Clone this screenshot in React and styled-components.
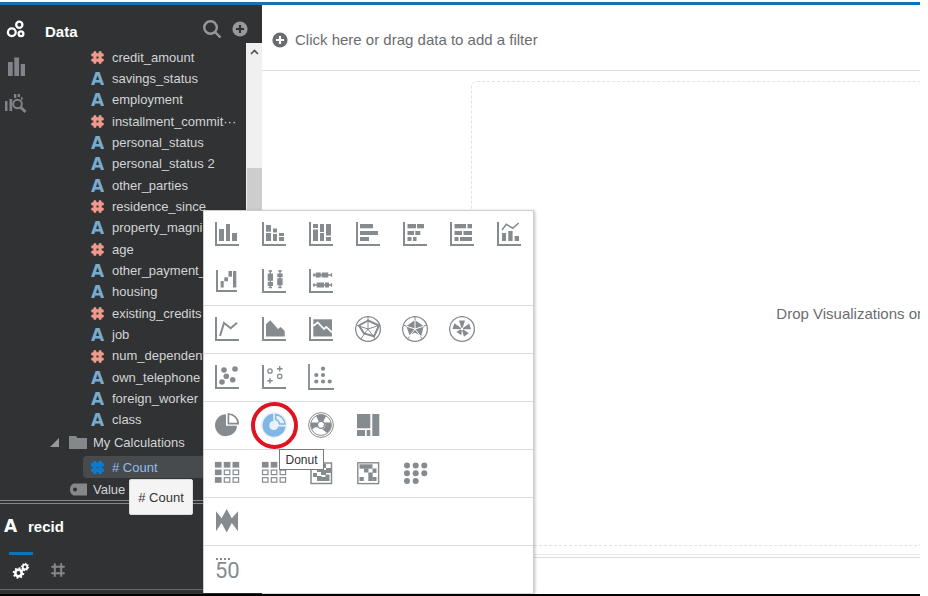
import React from "react";
import styled, { createGlobalStyle, css } from "styled-components";

const GlobalStyle = createGlobalStyle`
  * { box-sizing: border-box; }
  body { margin: 0; background: #fff; font-family: "Liberation Sans", Arial, sans-serif; font-size: 13px; }
  button { font: inherit; color: inherit; border: 0; padding: 0; background: none; cursor: pointer; }
  svg { display: block; flex: none; }
`;

const Page = styled.div`
  position: relative;
  display: flex;
  flex-direction: column;
  min-height: 100vh;
  margin-right: 8px;
  padding-top: 2px;
  border-bottom: 2px solid #000;
  overflow: hidden;
`;
const TopLine = styled.div`
  height: 3px;
  background: #1272b6;
`;
const Body = styled.div`
  flex: 1;
  display: flex;
`;
const Sidebar = styled.aside`
  width: 262px;
  flex: none;
  display: flex;
  flex-direction: column;
  background: #303234;
  color: #d3d4d5;
`;
const Upper = styled.div`
  flex: 1;
  display: flex;
`;
const Rail = styled.nav`
  width: 45px;
  padding: 13px 0 0 4px;
  display: flex;
  flex-direction: column;
  gap: 14px;
`;
const RailButton = styled.button`
  width: 24px;
  height: 23px;
  color: ${(p) => (p.$active ? "#fff" : "#808488")};
`;
const Panel = styled.section`
  flex: 1;
  min-width: 0;
  display: flex;
  flex-direction: column;
`;
const PanelHeader = styled.header`
  height: 38px;
  padding: 10px 14px 0 0;
  display: flex;
  gap: 10px;
`;
const Title = styled.h2`
  flex: 1;
  margin: 0;
  padding-top: 7px;
  font-size: 15px;
  line-height: 20px;
  color: #fff;
`;
const ToolButton = styled.button`
  height: 28px;
  display: flex;
  align-items: center;
  color: #96999c;
`;
const TreeArea = styled.div`
  flex: 1;
  display: flex;
`;
const Tree = styled.div`
  flex: 1;
  min-width: 0;
  display: flex;
  flex-direction: column;
  padding-top: 4px;
`;
const Fields = styled.ul`
  flex: 1;
  margin: 0;
  padding: 0 0 0 46px;
  list-style: none;
  display: flex;
  flex-direction: column;
`;
const Field = styled.li`
  flex: 1;
  display: flex;
  align-items: center;
  gap: 8px;
  line-height: 20px;
  white-space: nowrap;
`;
const TextGlyph = styled.span`
  width: 13px;
  display: flex;
  justify-content: center;
  font: bold 17px/20px "DejaVu Sans", sans-serif;
  color: ${(p) => p.$color || "#78abd0"};
`;
const Branch = styled.div`
  height: 22px;
  padding-left: ${(p) => p.$indent}px;
  display: flex;
  align-items: center;
  gap: 6px;
`;
const Selected = styled.div`
  height: 22px;
  margin: 3px 0 0 38px;
  padding-left: 8px;
  display: flex;
  align-items: center;
  gap: 8px;
  border-radius: 4px 0 0 4px;
  background: #484b4e;
  color: #8fbcf0;
`;
const Scrollbar = styled.div`
  width: 16px;
  display: flex;
  flex-direction: column;
  background: #f0f0f0;
  color: #505050;
`;
const ScrollUp = styled.button`
  height: 17px;
  display: flex;
  align-items: center;
  justify-content: center;
`;
const Thumb = styled.div`
  flex: 1;
  margin: 108px 0 60px 1px;
  background: #cdcdcd;
`;
const Splitter = styled.div`
  height: 4px;
  border: solid #85888a;
  border-width: 1px 0;
`;
const Details = styled.section`
  height: 90px;
  padding-bottom: 4px;
  display: flex;
  flex-direction: column;
`;
const DetailsTitle = styled.h3`
  margin: 12px 0 0 4px;
  height: 20px;
  display: flex;
  align-items: center;
  gap: 11px;
  font-size: 15px;
  color: #fff;
`;
const Tabs = styled.div`
  flex: 1;
  margin-top: 16px;
  padding-left: 9px;
  display: flex;
  gap: 13px;
  border-bottom: 1px solid #65686a;
`;
const Tab = styled.button`
  width: 24px;
  height: 30px;
  display: flex;
  justify-content: center;
  padding-top: 7px;
  border-top: 3px solid ${(p) => (p.$active ? "#1272b6" : "transparent")};
  color: ${(p) => (p.$active ? "#fff" : "#85888a")};
`;

const Main = styled.main`
  flex: 1;
  min-width: 0;
  display: flex;
  flex-direction: column;
  color: #6a6d70;
  font-size: 15px;
`;
const FilterBar = styled.button`
  height: 66px;
  padding: 4px 0 0 10px;
  display: flex;
  align-items: center;
  gap: 7px;
  border-bottom: 1px solid #dedede;
`;
const Canvas = styled.div`
  flex: 1;
  padding: 10px 0 8px 209px;
  display: flex;
  overflow: hidden;
  border-bottom: 1px solid #ececec;
`;
const DropZone = styled.div`
  flex: 1;
  min-width: 0;
  margin-right: -3px;
  display: flex;
  align-items: center;
  justify-content: flex-end;
  border: 1px dashed #e2e2e2;
  border-radius: 6px;
  white-space: nowrap;
`;
const Footer = styled.footer`
  height: 39px;
  padding-top: 2px;
  &::before {
    content: "";
    display: block;
    border-top: 1px solid #dedede;
  }
`;

const Menu = styled.div`
  position: absolute;
  left: 203px;
  top: 210px;
  border: 1px solid #cfcfcf;
  border-bottom: 0;
  background: #fff;
  box-shadow: 1px 1px 3px rgba(0, 0, 0, 0.25);
  color: #868b8f;
`;
const MenuGroup = styled.div`
  display: grid;
  grid-template-columns: repeat(7, 47px);
  grid-auto-rows: 47px;
  & + & { border-top: 1px solid #d9dbdd; }
`;
const Choice = styled.button`
  position: relative;
  grid-column: ${(p) => (p.$first ? 1 : "auto")};
  display: flex;
  align-items: center;
  justify-content: center;
  ${(p) => p.$marked && css`
    color: #7fb8e6;
    &::after {
      content: "";
      position: absolute;
      inset: 0;
      border: 4px solid #dd1422;
      border-radius: 50%;
    }
  `}
`;
const Halo = styled.circle`
  fill: #e9f0f7;
`;
const Tip = styled.div`
  position: absolute;
  display: flex;
  align-items: center;
  justify-content: center;
  color: #333;
`;
const DragTip = styled(Tip)`
  left: 129px;
  top: 479px;
  width: 64px;
  height: 36px;
  background: #f4f4f4;
  border: 1px solid #dcdcdc;
  border-radius: 2px;
`;
const NameTip = styled(Tip)`
  left: 279px;
  top: 449px;
  width: 45px;
  height: 21px;
  background: #fff;
  border: 1px solid #7c7c7c;
  font-size: 12px;
`;

const FIELDS = [
  ["#", "credit_amount"], ["A", "savings_status"], ["A", "employment"],
  ["#", "installment_commit···"], ["A", "personal_status"], ["A", "personal_status 2"],
  ["A", "other_parties"], ["#", "residence_since"], ["A", "property_magni"],
  ["#", "age"], ["A", "other_payment_"], ["A", "housing"], ["#", "existing_credits"],
  ["A", "job"], ["#", "num_dependent"], ["A", "own_telephone"],
  ["A", "foreign_worker"], ["A", "class"],
];

const Hash = ({ color = "#f09a8c", size = 13, weight = 3.4 }) => (
  <svg width={size} height={size} viewBox="0 0 14 14" fill="none" stroke={color} strokeWidth={weight} strokeLinecap="round" aria-hidden="true">
    <path d="M4.2 1.8V12.2M9.8 1.8V12.2M1.8 4.2H12.2M1.8 9.8H12.2" />
  </svg>
);
const Plus = ({ size = 16, sign = "#303234" }) => (
  <svg width={size} height={size} viewBox="0 0 16 16" aria-hidden="true">
    <circle cx="8" cy="8" r="7.6" fill="currentColor" />
    <path d="M8 4V12M4 8H12" stroke={sign} strokeWidth="2.2" />
  </svg>
);
const Gear = ({ x, y, r }) => (
  <g>
    <circle cx={x} cy={y} r={r} fill="none" stroke="currentColor" strokeWidth={r * 0.8} />
    {[0, 45, 90, 135, 180, 225, 270, 315].map((a) => (
      <rect key={a} x={x - r * 0.3} y={y - r * 1.8} width={r * 0.6} height={r * 0.8} fill="currentColor" transform={`rotate(${a + 12} ${x} ${y})`} />
    ))}
  </g>
);

/* Chart glyphs share a 27-unit grid; bars are [x, y, width, height]. */
const Axis = () => <path d="M2 1V24H25" fill="none" stroke="currentColor" strokeWidth="2" />;
const Rects = ({ of }) => of.map(([x, y, w, h]) => <rect key={`${x}-${y}`} x={x} y={y} width={w} height={h} />);
const Dots = ({ of, r }) => of.map(([x, y]) => <circle key={`${x}-${y}`} cx={x} cy={y} r={r} />);
const line = { fill: "none", stroke: "currentColor" };

const polar = (r, i, n = 5) => {
  const a = (i * 2 * Math.PI) / n - Math.PI / 2;
  return [13 + r * Math.cos(a), 13 + r * Math.sin(a)];
};
const Spokes = () => [0, 1, 2, 3, 4].map((i) => {
  const [x, y] = polar(12.3, i);
  return <path key={i} d={`M13 13L${x} ${y}`} {...line} strokeWidth="1" />;
});
const Cells = ({ solid }) => [0, 1, 2].map((r) => [0, 1, 2].map((c) => (
  <rect key={`${r}${c}`} x={1.5 + c * 8.8} y={2.5 + r * 7.6} width="5.5" height="4.5" stroke="currentColor" strokeWidth="1.2" fill={solid(r, c) ? "currentColor" : "none"} />
)));

const GLYPHS = {
  Bar: <><Axis /><Rects of={[[5, 8, 5, 12], [12, 3, 4, 17], [18, 12, 5, 8]]} /></>,
  "Stacked Bar": <><Axis /><Rects of={[[5, 4, 5, 6.7], [5, 12, 5, 8], [12, 7.5, 4, 4], [12, 13, 4, 7], [18, 12, 5, 3], [18, 16, 5, 4]]} /></>,
  "100% Stacked Bar": <><Axis /><Rects of={[[5, 3, 5, 4], [5, 8.5, 5, 11.5], [12, 3, 4, 8], [12, 12, 4, 8], [18, 3, 5, 11.5], [18, 16, 5, 4]]} /></>,
  "Horizontal Bar": <><Axis /><Rects of={[[5, 3, 13, 4.3], [5, 10, 18, 4], [5, 16, 9, 4]]} /></>,
  "Horizontal Stacked": <><Axis /><Rects of={[[5.5, 3, 8.5, 4.3], [15, 3, 7, 4.3], [5.5, 10, 6.5, 4], [13.3, 10, 5, 4], [5.5, 16, 4, 4], [11, 16, 3.5, 4]]} /></>,
  "100% Horizontal Stacked": <><Axis /><Rects of={[[5.5, 3, 11.5, 4.3], [18.5, 3, 4.5, 4.3], [5.5, 10, 7.5, 4], [14.5, 10, 8.5, 4], [5.5, 16, 4, 4], [11, 16, 12, 4]]} /></>,
  Combo: <><Axis /><Rects of={[[6, 12, 4, 8], [12.3, 10, 4.3, 10], [18.6, 15, 4.4, 5]]} /><path d="M6 9L10.3 3.3L16.7 7.3L22.7 2" {...line} strokeWidth="1.6" /></>,
  Waterfall: <><path d="M3 2V23H23" {...line} strokeWidth="2" /><Rects of={[[6.7, 13, 3, 6.5], [10.3, 9.3, 3.7, 4], [14.5, 3, 3.5, 5.7], [19, 3, 3.3, 16.5]]} /></>,
  Boxplot: <><Axis /><path d="M9.3 2V20M19 2V20M7.7 3H11M7.7 19.5H11M17.3 3H20.7M17.3 19.5H20.7" {...line} strokeWidth="1.3" /><Rects of={[[6.7, 5.5, 5.3, 7.3], [6.7, 14, 5.3, 4], [16.2, 5.5, 5.4, 3.7], [16.2, 10.3, 5.4, 7]]} /></>,
  "Horizontal Boxplot": <><Axis /><path d="M5 7H24M5 17H24M6 5.3V8.7M23.5 5.3V8.7M6 15.3V18.7M23.5 15.3V18.7" {...line} strokeWidth="1.3" /><Rects of={[[7.7, 4.5, 5, 5], [13.7, 4.5, 6.5, 5], [8.7, 14.5, 7.3, 5], [17, 14.5, 4, 5]]} /></>,
  Line: <><Axis /><path d="M6 20L10 7L16.7 12.3L23 6.7" {...line} strokeWidth="2" /></>,
  Area: <><Axis /><path d="M5 20.5V8.3L9.3 4.3L17 13L19.7 11L23.7 15V20.5Z" /></>,
  "100% Area": <><Axis /><path d="M5.3 3.3H24V20.5H5.3Z" /><path d="M5.3 10L9.7 6.3L16 13L18.3 11L24 16.3" fill="none" stroke="#fff" strokeWidth="1.7" /></>,
  "Radar Line": <><circle cx="13" cy="13" r="12.4" {...line} strokeWidth="1.3" /><Spokes /><path d="M13 4.5L24 9.5L19 20.3L9 17.5L4 9.5Z" {...line} strokeWidth="2" /></>,
  "Radar Area": <><circle cx="13" cy="13" r="12.4" {...line} strokeWidth="1.3" /><path d="M13 4L21.7 10.3L19.3 20L13 16.8L7.5 19L4.3 10.3Z" /><path d="M13 13V4M13 13L21.7 10.2M13 13L19 21M13 13L7 21M13 13L4.3 10.2" fill="none" stroke="#fff" strokeWidth="1" /><path d="M13 4V0.6M21.5 10.2L25 9M18.5 20.5L20.3 23M7.5 20.5L5.7 23M4.5 10.2L1 9" {...line} /></>,
  "Radar Bar": <><circle cx="13" cy="13" r="12.4" {...line} strokeWidth="1.3" />{[[0, 8.5], [72, 8.5], [144, 7.5], [216, 5.5], [288, 9]].map(([a, h]) => <path key={a} d={`M12.3 11.8L10 ${13 - h}H16L13.7 11.8Z`} transform={`rotate(${a} 13 13)`} />)}</>,
  Scatter: <><Axis /><Dots r={2.8} of={[[10, 6], [21, 5], [12.3, 12.3], [8, 18], [18.7, 15.7]]} /></>,
  "Scatter Category": <><Axis /><path d="M18.7 2V7.5M16 4.7H21.5M9 14V19.5M6.3 16.7H11.7" {...line} strokeWidth="1.4" /><circle cx="9" cy="7" r="2.2" {...line} strokeWidth="1.3" /><circle cx="18.7" cy="12.3" r="2.2" {...line} strokeWidth="1.3" /></>,
  "Stacked Category": <><path d="M1 0V25H26" {...line} strokeWidth="1.8" /><Dots r={2.1} of={[[15, 4.7], [8.3, 11], [15, 11], [8.3, 17.5], [15, 17.5], [21.7, 17.5]]} /></>,
  Pie: <><path d="M12 2.3A11 11 0 1 0 23 13.7H12Z" /><path d="M14.4 2V11.7H24.2A9.8 9.8 0 0 0 14.4 2Z" {...line} strokeWidth="1.7" /></>,
  Donut: <><Halo cx="13" cy="13" r="13" /><path d="M12.3 1.8A11.5 11.5 0 1 0 24.5 14.5H17.2A4.5 4.5 0 1 1 12.3 9Z" /><path d="M14.7 2.4V7.4A6 6 0 0 1 18.7 12H24A10.6 10.6 0 0 0 14.7 2.4Z" {...line} strokeWidth="1.5" /></>,
  Sunburst: <><circle cx="13" cy="13" r="12.4" {...line} strokeWidth="1" /><circle cx="13" cy="13" r="10.4" {...line} strokeWidth="1" /><path d="M8.2 4A10 10 0 0 1 18 4L15.3 9.5A4 4 0 0 0 10.7 9.5ZM2.8 10.5H9.5A4.5 4.5 0 0 0 10.8 15.5L7 15.2L4.2 17.5A10 10 0 0 1 2.8 10.5ZM16.5 10.5L22.8 10.5A10 10 0 0 1 19 21L14 17A4 4 0 0 0 16.5 10.5Z" /><circle cx="13" cy="12.8" r="3.5" {...line} strokeWidth="1.3" /></>,
  Treemap: <Rects of={[[2, 2, 13.3, 14.3], [17.3, 2, 7, 22], [2, 18, 8, 6], [11.7, 18, 3.6, 6]]} />,
  Pivot: <Cells solid={(r, c) => r === 0 || c === 0} />,
  Table: <Cells solid={(r) => r === 0} />,
  Matrix: <><rect x="3" y="3" width="20.5" height="20.5" {...line} strokeWidth="1.5" /><Rects of={[[4, 4, 5, 4], [13, 4, 5, 4], [9, 8, 4, 4], [18, 8, 5, 5], [13, 10, 5, 5], [5, 13, 4, 4], [9, 16, 4.5, 5], [17.5, 14.5, 4, 6.5], [13, 17, 5, 4]]} /></>,
  Heatmap: <><rect x="2.8" y="2.8" width="20.8" height="20.8" {...line} strokeWidth="1.4" /><Rects of={[[4.5, 4.3, 13, 4.4], [9, 8.5, 4.5, 4], [17.5, 8.5, 4, 4.4], [13.3, 12.5, 4.4, 8.5], [4.5, 17, 4.3, 4], [17.5, 17, 4, 4]]} /></>,
  "Tag Cloud": <Dots r={3} of={[[5, 5.5], [13.7, 5.5], [22.3, 5.5], [5, 13.2], [13.7, 13.2], [22.3, 13.2], [5, 21], [13.7, 21]]} />,
  Parallel: <path d="M12.7 1L17.8 10.3L24 3.3V23.3L17.8 15L12.7 24.5L7.6 15L2 23.3V3.3L7.6 10.3Z" />,
  Tile: <><Rects of={[[2, 2, 2, 2], [6, 2, 2, 2], [10, 2, 2, 2], [14, 2, 2, 2]]} /><text x="1" y="22" fontSize="22" fontFamily="Roboto, sans-serif">50</text></>,
};

const GROUPS = [
  [["Bar", "Stacked Bar", "100% Stacked Bar", "Horizontal Bar", "Horizontal Stacked", "100% Horizontal Stacked", "Combo"], ["Waterfall", "Boxplot", "Horizontal Boxplot"]],
  [["Line", "Area", "100% Area", "Radar Line", "Radar Area", "Radar Bar"]],
  [["Scatter", "Scatter Category", "Stacked Category"]],
  [["Pie", "Donut", "Sunburst", "Treemap"]],
  [["Pivot", "Table", "Matrix", "Heatmap", "Tag Cloud"]],
  [["Parallel"]],
  [["Tile"]],
];

function ChartMenu() {
  return (
    <Menu role="menu">
      {GROUPS.map((rows) => (
        <MenuGroup key={rows[0][0]}>
          {rows.map((row) => row.map((name, i) => (
            <Choice key={name} role="menuitem" aria-label={name} $first={i === 0} $marked={name === "Donut"}>
              <svg width="27" height="27" viewBox="0 0 27 27" fill="currentColor" aria-hidden="true">{GLYPHS[name]}</svg>
            </Choice>
          )))}
        </MenuGroup>
      ))}
    </Menu>
  );
}

export default function App() {
  return (
    <>
      <GlobalStyle />
      <Page>
        <TopLine />
        <Body>
          <Sidebar>
            <Upper>
              <Rail>
                <RailButton $active aria-label="Data">
                  <svg width="24" height="20" viewBox="0 0 24 20" fill="none" stroke="currentColor" strokeWidth="2.3" aria-hidden="true">
                    <circle cx="7.8" cy="12.3" r="3.9" /><circle cx="15.3" cy="4.8" r="3.1" /><circle cx="17" cy="13.7" r="2.4" />
                  </svg>
                </RailButton>
                <RailButton aria-label="Visualizations">
                  <svg width="24" height="22" viewBox="0 0 24 22" fill="currentColor" aria-hidden="true"><Rects of={[[4, 6, 4.7, 14], [10.3, 1.5, 4.7, 18.5], [16.7, 8, 4.3, 12]]} /></svg>
                </RailButton>
                <RailButton aria-label="Analytics">
                  <svg width="24" height="22" viewBox="0 0 24 22" fill="currentColor" aria-hidden="true">
                    <Rects of={[[1, 8, 2.5, 10], [5.5, 6, 2.7, 12], [10, 1, 2.3, 4], [13.7, 1, 2.3, 3], [17, 4, 1.5, 3]]} />
                    <circle cx="13.5" cy="11" r="4.3" {...line} strokeWidth="2" /><path d="M17 14.5L21.5 19" {...line} strokeWidth="3" />
                  </svg>
                </RailButton>
              </Rail>
              <Panel>
                <PanelHeader>
                  <Title>Data</Title>
                  <ToolButton aria-label="Search">
                    <svg width="20" height="20" viewBox="0 0 20 20" {...line} strokeWidth="2.4" aria-hidden="true"><circle cx="8.5" cy="8.5" r="6.3" /><path d="M13 13L18.5 18.5" /></svg>
                  </ToolButton>
                  <ToolButton aria-label="Add"><Plus /></ToolButton>
                </PanelHeader>
                <TreeArea>
                  <Tree>
                    <Fields>
                      {FIELDS.map(([type, name]) => (
                        <Field key={name}>{type === "#" ? <Hash /> : <TextGlyph aria-hidden="true">A</TextGlyph>}<span>{name}</span></Field>
                      ))}
                    </Fields>
                    <Branch $indent={5}>
                      <svg width="10" height="10" viewBox="0 0 10 10" fill="#96999c" aria-hidden="true"><path d="M9 1V10H0Z" /></svg>
                      <svg width="21" height="14" viewBox="0 0 21 14" fill="#85888b" aria-hidden="true"><path d="M3 1H10L11.5 3H21V14H3Z" /></svg>
                      My Calculations
                    </Branch>
                    <Selected><Hash color="#0b7bd0" weight={4.2} /># Count</Selected>
                    <Branch $indent={25}>
                      <svg width="17" height="13" viewBox="0 0 17 13" aria-hidden="true"><path d="M3.5 0.5H17V12.5H3.5Q0 11 0 6.5Q0 2 3.5 0.5Z" fill="#85888b" /><circle cx="5" cy="6.5" r="2" fill="#303234" /></svg>
                      Value
                    </Branch>
                  </Tree>
                  <Scrollbar>
                    <ScrollUp aria-label="Scroll up"><svg width="9" height="6" viewBox="0 0 9 6" {...line} strokeWidth="1.6" aria-hidden="true"><path d="M1 5L4.5 1.5L8 5" /></svg></ScrollUp>
                    <Thumb />
                  </Scrollbar>
                </TreeArea>
              </Panel>
            </Upper>
            <Splitter />
            <Details>
              <DetailsTitle><TextGlyph $color="#fff" aria-hidden="true">A</TextGlyph>recid</DetailsTitle>
              <Tabs>
                <Tab $active aria-label="General">
                  <svg width="18" height="18" viewBox="0 0 18 18" aria-hidden="true"><Gear x={6.5} y={11} r={3.2} /><Gear x={13} y={5} r={2.3} /></svg>
                </Tab>
                <Tab aria-label="Number format"><Hash color="currentColor" size={16} weight={1.7} /></Tab>
              </Tabs>
            </Details>
          </Sidebar>
          <Main>
            <FilterBar><Plus sign="#fff" />Click here or drag data to add a filter</FilterBar>
            <Canvas><DropZone>Drop Visualizations or</DropZone></Canvas>
            <Footer />
          </Main>
        </Body>
        <DragTip role="tooltip"># Count</DragTip>
        <ChartMenu />
        <NameTip role="tooltip">Donut</NameTip>
      </Page>
    </>
  );
}
